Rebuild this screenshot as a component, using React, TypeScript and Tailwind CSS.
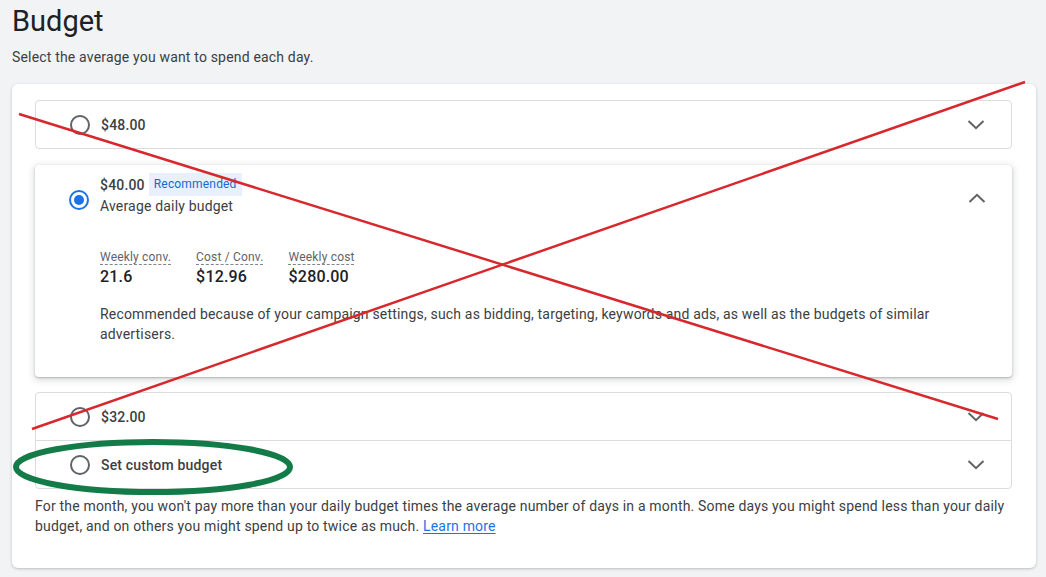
import { ReactNode } from "react"

function Radio({ checked }: { checked?: boolean }) {
  return checked ? (
    <span className="flex h-5 w-5 items-center justify-center rounded-full border-2 border-[#1a73e8]">
      <span className="h-2.5 w-2.5 rounded-full bg-[#1a73e8]" />
    </span>
  ) : (
    <span className="block h-5 w-5 rounded-full border-2 border-[#5f6368]" />
  )
}

function Chevron({ up }: { up?: boolean }) {
  return (
    <svg width="18" height="10" viewBox="0 0 18 10" className="text-[#5f6368]">
      <path
        d={up ? "M1.5 9 L9 1.8 L16.5 9" : "M1.5 1 L9 8.2 L16.5 1"}
        fill="none"
        stroke="currentColor"
        strokeWidth="2"
      />
    </svg>
  )
}

function Option({ label, className }: { label: ReactNode; className?: string }) {
  return (
    <div
      className={
        "flex h-[49px] items-center rounded border border-[#dadce0] bg-white pl-[34px] pr-[26px] " +
        (className ?? "")
      }
    >
      <Radio />
      <div className="ml-[11px] flex-1 text-sm font-medium text-[#3c4043]">{label}</div>
      <Chevron />
    </div>
  )
}

const stats = [
  { label: "Weekly conv.", value: "21.6" },
  { label: "Cost / Conv.", value: "$12.96" },
  { label: "Weekly cost", value: "$280.00" },
]

export default function App() {
  return (
    <div
      className="relative min-h-[577px] w-full bg-[#f1f3f4] pl-3 pr-[10px] pt-[3px] tracking-[0.18px]"
      style={{ fontFamily: "Roboto, 'Liberation Sans', sans-serif" }}
    >
      <h1 className="text-[29px] leading-[36px] tracking-normal text-[#202124]">Budget</h1>
      <p className="mt-[8px] text-sm leading-5 text-[#3c4043]">
        Select the average you want to spend each day.
      </p>

      <div className="mt-[17px] rounded-md bg-white pb-[32px] pl-[23px] pr-6 pt-4 shadow-[0_1px_3px_rgba(60,64,67,0.3)]">
        <Option label="$48.00" />

        <div className="mt-4 rounded bg-white pb-[33px] pl-[34px] pr-[26px] pt-[8px] shadow-[0_1px_2px_rgba(60,64,67,0.3),0_2px_6px_2px_rgba(60,64,67,0.15)]">
          <div className="flex items-start">
            <div className="mt-[17px]">
              <Radio checked />
            </div>
            <div className="ml-[11px] flex-1">
              <div className="flex items-center">
                <span className="text-sm font-medium leading-5 text-[#3c4043]">$40.00</span>
                <span className="ml-1 bg-[#e8f0fe] px-[5px] py-[3px] text-xs leading-[17px] text-[#1967d2]">
                  Recommended
                </span>
              </div>
              <div className="text-sm leading-5 text-[#3c4043]">Average daily budget</div>
            </div>
            <div className="mt-[20px]">
              <Chevron up />
            </div>
          </div>

          <div className="ml-[31px] mt-[33px] flex gap-[25px]">
            {stats.map(({ label, value }) => (
              <div key={label}>
                <div className="text-xs leading-4 text-[#5f6368] underline decoration-dashed decoration-[#80868b] underline-offset-[3px]">
                  {label}
                </div>
                <div className="mt-[2px] text-base font-medium leading-5 text-[#202124]">{value}</div>
              </div>
            ))}
          </div>

          <p className="ml-[31px] mt-[17px] pr-[10px] text-sm leading-5 text-[#3c4043]">
            Recommended because of your campaign settings, such as bidding, targeting, keywords and ads, as well as the
            budgets of similar advertisers.
          </p>
        </div>

        <div className="mt-[15px]">
          <Option label="$32.00" className="rounded-b-none" />
          <Option label="Set custom budget" className="-mt-px rounded-t-none" />
        </div>

        <p className="mt-[7px] text-sm leading-5 text-[#3c4043]">
          For the month, you won't pay more than your daily budget times the average number of days in a month. Some
          days you might spend less than your daily budget, and on others you might spend up to twice as much.{" "}
          <a className="text-[#1a73e8] underline underline-offset-2" href="#">
            Learn more
          </a>
        </p>
      </div>

      <svg
        className="pointer-events-none absolute left-0 top-0"
        width="1046"
        height="577"
        viewBox="0 0 1046 577"
      >
        <line x1="19" y1="114" x2="998" y2="419" stroke="#d7282d" strokeWidth="2.5" />
        <line x1="1025" y1="82" x2="32" y2="429" stroke="#d7282d" strokeWidth="2.5" />
        <ellipse cx="153" cy="467" rx="137" ry="25" fill="none" stroke="#137b48" strokeWidth="6" />
      </svg>
    </div>
  )
}
